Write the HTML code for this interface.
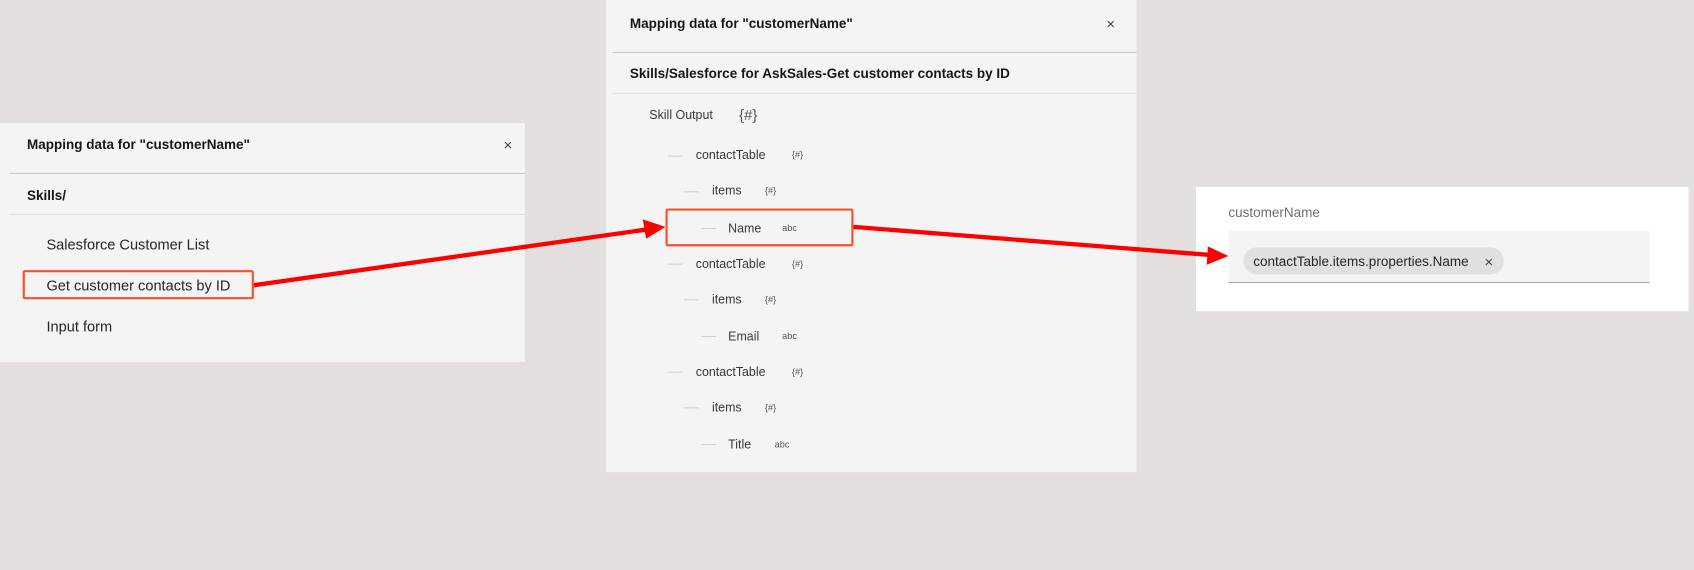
<!DOCTYPE html>
<html><head><meta charset="utf-8"><style>
html,body{margin:0;padding:0;width:1694px;height:570px;overflow:hidden;background:#e4dfdf;}
#w{position:absolute;left:0;top:0;width:1568px;height:528px;transform:scale(1.08036);transform-origin:0 0;font-family:"Liberation Sans",sans-serif;color:#161616;}
.p{position:absolute;background:#f4f4f4;}
.t{position:absolute;white-space:nowrap;line-height:1;margin-top:2px;}
.b{font-weight:bold;font-size:12.5px;}
.hr{position:absolute;height:1px;background:#c6c6c6;}
.hl{position:absolute;height:1px;background:#e0e0e0;}
.i{font-size:13.5px;color:#262626;}
.s{font-size:11.5px;color:#393939;}
.d{position:absolute;height:1px;width:14px;background:#d0d0d0;}
.g{font-size:8.5px;color:#555;}
.box{position:absolute;border:2px solid #f4512c;border-radius:2px;box-sizing:border-box;}
</style></head><body><div id="w">
<div class="p" style="left:0;top:114px;width:486px;height:221px;"></div>
<div class="t b" style="left:25px;top:126px;">Mapping data for "customerName"</div>
<div class="t" style="left:466px;top:125px;font-size:14px;color:#444;">×</div>
<div class="hr" style="left:9px;top:160px;width:477px;"></div>
<div class="t b" style="left:25px;top:173px;">Skills/</div>
<div class="hl" style="left:9px;top:198px;width:477px;"></div>
<div class="t i" style="left:43px;top:218px;">Salesforce Customer List</div>
<div class="t i" style="left:43px;top:256px;">Get customer contacts by ID</div>
<div class="t i" style="left:43px;top:294px;">Input form</div>
<div class="box" style="left:21px;top:250px;width:214px;height:27px;"></div>
<div class="p" style="left:561px;top:0;width:491px;height:437px;"></div>
<div class="t b" style="left:583px;top:14px;">Mapping data for "customerName"</div>
<div class="t" style="left:1024px;top:13px;font-size:14px;color:#444;">×</div>
<div class="hr" style="left:567px;top:48px;width:485px;"></div>
<div class="t b" style="left:583px;top:60px;">Skills/Salesforce for AskSales-Get customer contacts by ID</div>
<div class="hl" style="left:567px;top:86px;width:485px;"></div>
<div class="t s" style="left:601px;top:100px;">Skill Output</div>
<div class="t" style="left:684px;top:97px;font-size:14px;color:#555;">{#}</div>

<div class="d" style="left:618px;top:144px;"></div><div class="t s" style="left:644px;top:137px;">contactTable</div><div class="t g" style="left:733px;top:137px;">{#}</div>
<div class="d" style="left:633px;top:177px;"></div><div class="t s" style="left:659px;top:170px;">items</div><div class="t g" style="left:708px;top:170px;">{#}</div>
<div class="d" style="left:649px;top:211px;"></div><div class="t s" style="left:674px;top:205px;">Name</div><div class="t g" style="left:724px;top:205px;">abc</div>
<div class="box" style="left:616px;top:193px;width:174px;height:35px;"></div>
<div class="d" style="left:618px;top:244px;"></div><div class="t s" style="left:644px;top:238px;">contactTable</div><div class="t g" style="left:733px;top:238px;">{#}</div>
<div class="d" style="left:633px;top:277px;"></div><div class="t s" style="left:659px;top:271px;">items</div><div class="t g" style="left:708px;top:271px;">{#}</div>
<div class="d" style="left:649px;top:311px;"></div><div class="t s" style="left:674px;top:305px;">Email</div><div class="t g" style="left:724px;top:305px;">abc</div>
<div class="d" style="left:618px;top:344px;"></div><div class="t s" style="left:644px;top:338px;">contactTable</div><div class="t g" style="left:733px;top:338px;">{#}</div>
<div class="d" style="left:633px;top:377px;"></div><div class="t s" style="left:659px;top:371px;">items</div><div class="t g" style="left:708px;top:371px;">{#}</div>
<div class="d" style="left:649px;top:411px;"></div><div class="t s" style="left:674px;top:405px;">Title</div><div class="t g" style="left:717px;top:405px;">abc</div>
<div style="position:absolute;left:1107px;top:173px;width:456px;height:115px;background:#fff;"></div>
<div class="t" style="left:1137px;top:189px;font-size:12.5px;color:#6f6f6f;">customerName</div>
<div style="position:absolute;left:1137px;top:214px;width:390px;height:48px;background:#f4f4f4;border-bottom:1px solid #a8a8a8;box-sizing:border-box;"></div>
<div style="position:absolute;left:1151px;top:229px;width:241px;height:25px;background:#e0e0e0;border-radius:13px;"></div>
<div class="t" style="left:1160px;top:234px;font-size:12.5px;color:#262626;">contactTable.items.properties.Name</div>
<div class="t" style="left:1374px;top:233px;font-size:14px;color:#444;">×</div>
<svg style="position:absolute;left:0;top:0" width="1568" height="528">
<line x1="235" y1="264" x2="598" y2="212.5" stroke="#f00" stroke-width="4"/>
<polygon points="616,210 595,203 598,221" fill="#f00"/>
<line x1="790" y1="210" x2="1120" y2="236" stroke="#f00" stroke-width="4"/>
<polygon points="1137,237 1118,228 1117,245" fill="#f00"/>
</svg>
</div></body></html>
